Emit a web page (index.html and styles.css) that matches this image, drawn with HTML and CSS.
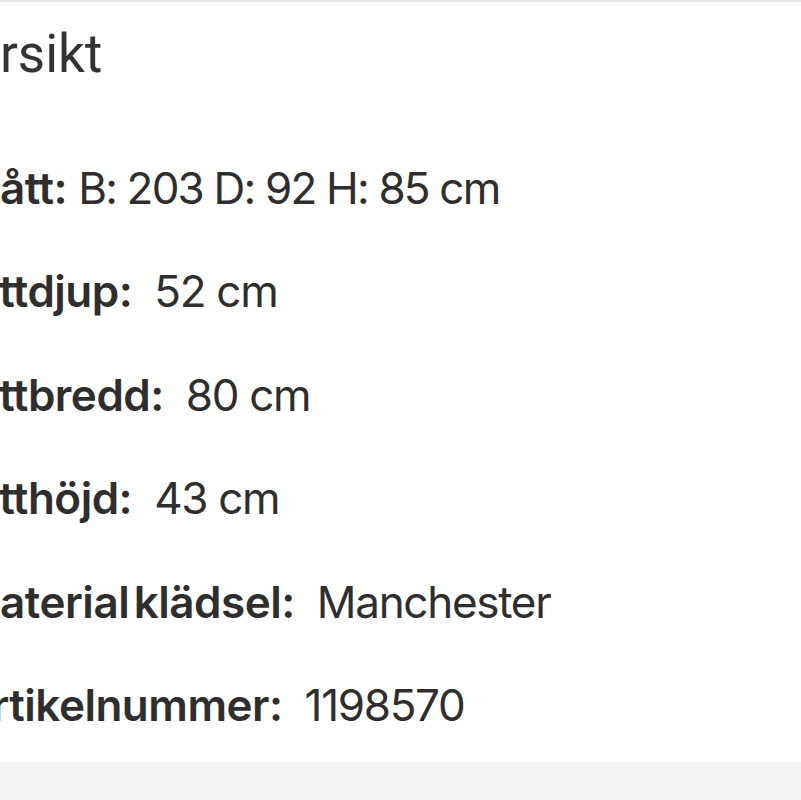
FILE: index.html
```html
<!DOCTYPE html>
<html lang="sv">
<head>
<meta charset="utf-8">
<title>Översikt</title>
<link rel="stylesheet" href="styles.css">
</head>
<body>
<div class="topline"></div>
<main class="panel">
  <h2 class="title">Översikt</h2>
  <ul class="specs">
    <li class="row"><span class="label">Mått:</span> <span class="val-tight">B: 203 D: 92 H: 85 cm</span></li>
    <li class="row"><span class="label">Sittdjup:</span><span class="val">52 cm</span></li>
    <li class="row"><span class="label">Sittbredd:</span><span class="val">80 cm</span></li>
    <li class="row"><span class="label">Sitthöjd:</span><span class="val">43 cm</span></li>
    <li class="row"><span class="label">Material klädsel:</span><span class="val">Manchester</span></li>
    <li class="row"><span class="label">Artikelnummer:</span><span class="val">1198570</span></li>
  </ul>
</main>
<footer class="footer"></footer>
</body>
</html>
```

FILE: styles.css
```css
html, body {
  margin: 0;
  padding: 0;
  background: #ffffff;
  overflow: hidden;
}
body {
  width: 801px;
  height: 800px;
  display: flex;
  flex-direction: column;
  color: #2e2e2e;
}
.topline {
  height: 2px;
  background: #e6e6e8;
  flex: none;
}
.panel {
  flex: 1;
  overflow: hidden;
}
.title {
  margin: 0;
  padding-top: 22px;
  margin-left: -90px;
  font-family: Roboto, "Liberation Sans", sans-serif;
  font-weight: 400;
  font-size: 53px;
  line-height: 60px;
  color: #333333;
  white-space: nowrap;
}
.specs {
  list-style: none;
  margin: 0;
  padding: 74px 0 0 0;
  margin-left: -40px;
  font-family: Inter, "Noto Sans", sans-serif;
  font-size: 44px;
  color: #2e2e2e;
}
.row {
  height: 103.4px;
  line-height: 60px;
  white-space: nowrap;
  letter-spacing: -1.3px;
}
.label {
  font-weight: 600;
  letter-spacing: -0.5px;
  word-spacing: -6px;
}
.val-tight {
  letter-spacing: -1.8px;
}
.val {
  margin-left: 22px;
}
.footer {
  height: 38px;
  flex: none;
  background: #f4f4f4;
}
```
